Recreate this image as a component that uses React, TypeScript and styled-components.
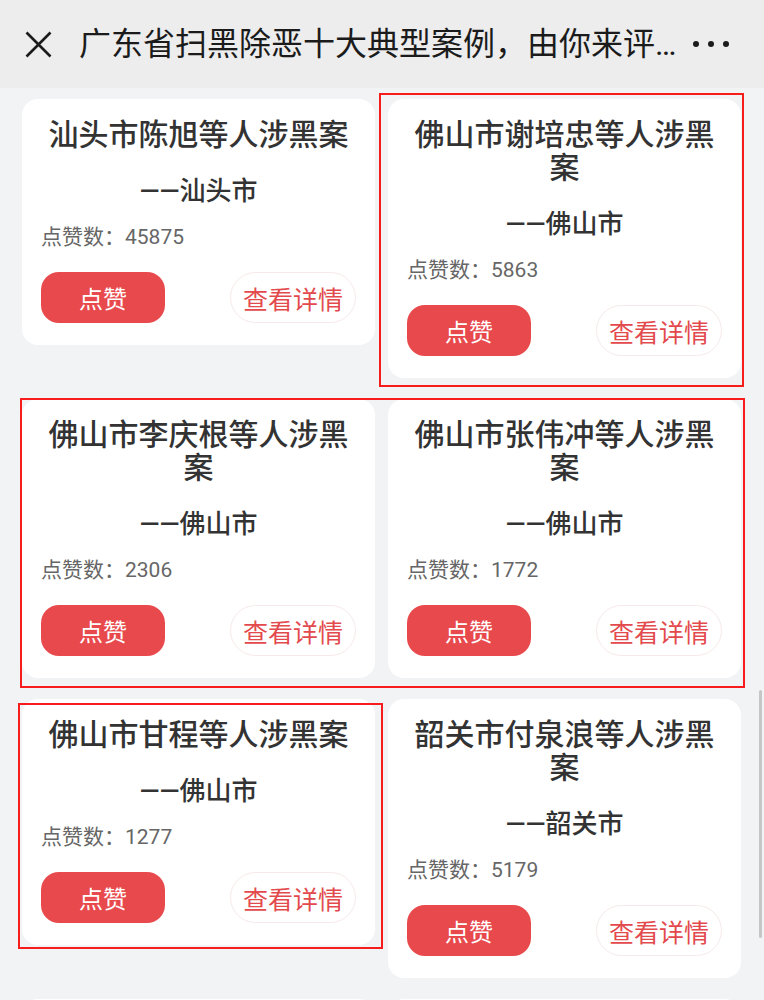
import React from 'react';
import styled, { createGlobalStyle } from 'styled-components';

const GlobalStyle = createGlobalStyle`
  html, body {
    margin: 0;
    padding: 0;
    background: #f2f3f5;
  }
  * {
    box-sizing: border-box;
  }
`;

const Page = styled.div`
  height: 1000px;
  overflow: hidden;
  display: flex;
  flex-direction: column;
  background: #f2f3f5;
  font-family: Roboto, 'Noto Sans CJK SC', sans-serif;
`;

const TopBar = styled.header`
  flex: 0 0 88px;
  display: flex;
  align-items: center;
  padding-left: 25px;
  background: #ededed;
  color: #1b1b1b;
`;

const IconButton = styled.button.attrs({ type: 'button' })`
  display: flex;
  align-items: center;
  justify-content: center;
  padding: 0;
  background: none;
  border: none;
  color: inherit;
`;

const PageTitle = styled.h1`
  width: 605px;
  margin: 0 8px 0 27px;
  font-size: 32px;
  font-weight: 400;
  line-height: 40px;
  white-space: nowrap;
  overflow: hidden;
`;

const List = styled.main`
  position: relative;
  flex: 1;
  padding: 11px 23px 0 22px;
`;

const Grid = styled.div`
  display: grid;
  grid-template-columns: 353px 353px;
  column-gap: 13px;
  row-gap: 21px;
  align-items: start;
`;

const Card = styled.section`
  display: flex;
  flex-direction: column;
  padding: 19px 19px 22px;
  background: #fff;
  border-radius: 16px;
`;

const CaseTitle = styled.h2`
  margin: 0;
  font-size: 30px;
  font-weight: 500;
  line-height: 33px;
  text-align: center;
  color: #333;
`;

const Region = styled.div`
  margin-top: 23px;
  font-size: 26px;
  font-weight: 500;
  line-height: 34px;
  text-align: center;
  color: #333;
`;

const Likes = styled.div`
  margin-top: 15px;
  font-size: 21px;
  line-height: 28px;
  color: #666;
`;

const Actions = styled.div`
  display: flex;
  justify-content: space-between;
  margin-top: 21px;
`;

const LikeButton = styled.button.attrs({ type: 'button' })`
  width: 124px;
  height: 51px;
  padding: 0;
  border: none;
  border-radius: 18px;
  background: #e8494c;
  color: #fff;
  font-family: inherit;
  font-size: 24px;
`;

const DetailButton = styled.button.attrs({ type: 'button' })`
  width: 126px;
  height: 51px;
  padding: 0;
  border: 1px solid #f7e9e9;
  border-radius: 26px;
  background: #fff;
  color: #e34a4d;
  font-family: inherit;
  font-size: 25px;
`;

const Mark = styled.div<{ $left: number; $top: number; $w: number; $h: number }>`
  position: absolute;
  left: ${(p) => p.$left}px;
  top: ${(p) => p.$top}px;
  width: ${(p) => p.$w}px;
  height: ${(p) => p.$h}px;
  border: 2px solid #f91c1c;
  pointer-events: none;
`;

const ScrollThumb = styled.div`
  position: fixed;
  right: 2px;
  top: 690px;
  width: 3px;
  height: 248px;
  border-radius: 2px;
  background: #c6c6c6;
`;

interface CaseItem {
  title: string;
  city: string;
  likes: number;
}

const cases: CaseItem[] = [
  { title: '汕头市陈旭等人涉黑案', city: '汕头市', likes: 45875 },
  { title: '佛山市谢培忠等人涉黑案', city: '佛山市', likes: 5863 },
  { title: '佛山市李庆根等人涉黑案', city: '佛山市', likes: 2306 },
  { title: '佛山市张伟冲等人涉黑案', city: '佛山市', likes: 1772 },
  { title: '佛山市甘程等人涉黑案', city: '佛山市', likes: 1277 },
  { title: '韶关市付泉浪等人涉黑案', city: '韶关市', likes: 5179 },
  { title: '惠州市黄某等人涉黑案', city: '惠州市', likes: 1034 },
  { title: '江门市李某等人涉黑案', city: '江门市', likes: 986 },
];

const CloseIcon = () => (
  <svg width="27" height="27" viewBox="0 0 27 27" fill="none">
    <path d="M1.5 1.5L25.5 25.5M25.5 1.5L1.5 25.5" stroke="currentColor" strokeWidth="2.6" />
  </svg>
);

const MoreIcon = () => (
  <svg width="38" height="10" viewBox="0 0 38 10" fill="currentColor">
    <circle cx="4" cy="5" r="3" />
    <circle cx="19" cy="5" r="3" />
    <circle cx="34" cy="5" r="3" />
  </svg>
);

const CaseCard: React.FC<{ item: CaseItem }> = ({ item }) => (
  <Card>
    <CaseTitle>{item.title}</CaseTitle>
    <Region>——{item.city}</Region>
    <Likes>点赞数：{item.likes}</Likes>
    <Actions>
      <LikeButton>点赞</LikeButton>
      <DetailButton>查看详情</DetailButton>
    </Actions>
  </Card>
);

export default function App() {
  return (
    <Page>
      <GlobalStyle />
      <TopBar>
        <IconButton>
          <CloseIcon />
        </IconButton>
        <PageTitle>广东省扫黑除恶十大典型案例，由你来评…</PageTitle>
        <IconButton>
          <MoreIcon />
        </IconButton>
      </TopBar>
      <List>
        <Grid>
          {cases.map((item) => (
            <CaseCard key={item.title} item={item} />
          ))}
        </Grid>
        <Mark $left={379} $top={5} $w={365} $h={294} />
        <Mark $left={20} $top={310} $w={725} $h={290} />
        <Mark $left={18} $top={615} $w={365} $h={246} />
      </List>
      <ScrollThumb />
    </Page>
  );
}
